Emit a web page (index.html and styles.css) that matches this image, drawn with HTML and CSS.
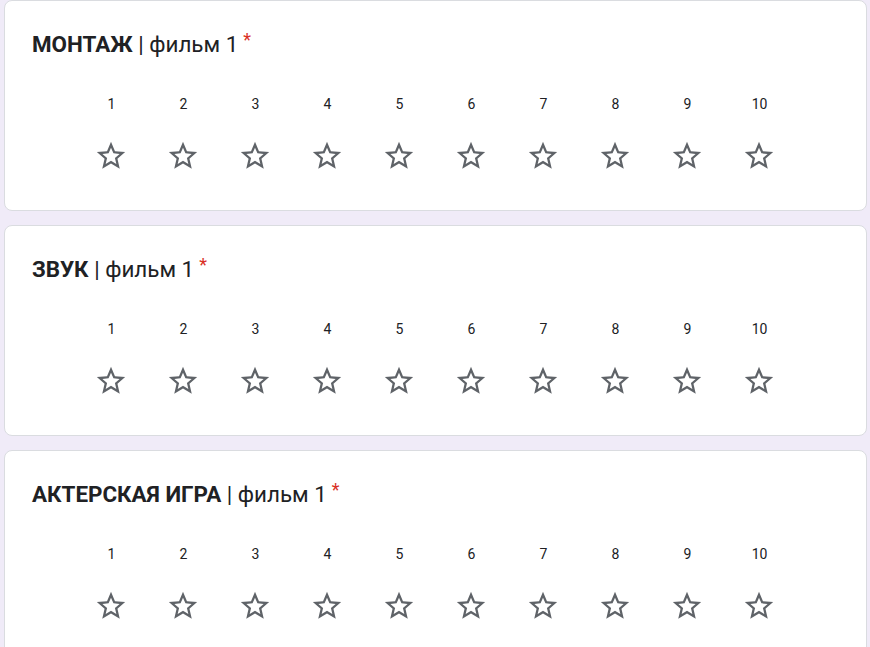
FILE: index.html
```html
<!DOCTYPE html>
<html lang="ru">
<head>
<meta charset="utf-8">
<title>Форма</title>
<link rel="stylesheet" href="styles.css">
</head>
<body>
<main class="form">
  <section class="card">
    <div class="title"><b>МОНТАЖ</b> | фильм 1<span class="req">*</span></div>
    <div class="scale"></div>
  </section>
  <section class="card">
    <div class="title"><b>ЗВУК</b> | фильм 1<span class="req">*</span></div>
    <div class="scale"></div>
  </section>
  <section class="card">
    <div class="title"><b>АКТЕРСКАЯ ИГРА</b> | фильм 1<span class="req">*</span></div>
    <div class="scale"></div>
  </section>
</main>
<script>
  var star = '<svg class="star" viewBox="0 0 24 24" width="34" height="34"><path d="M22 9.24l-7.19-.62L12 2 9.19 8.63 2 9.24l5.46 4.73L5.82 21 12 17.27 18.18 21l-1.63-7.03L22 9.24zM12 15.4l-3.76 2.27 1-4.28-3.32-2.88 4.38-.38L12 6.1l1.71 4.04 4.38.38-3.32 2.88 1 4.28L12 15.4z"/></svg>';
  document.querySelectorAll('.scale').forEach(function (s) {
    var h = '';
    for (var i = 1; i <= 10; i++) {
      h += '<label class="opt"><span class="num">' + i + '</span>' + star + '</label>';
    }
    s.innerHTML = h;
  });
</script>
</body>
</html>
```
FILE: styles.css
```css
html, body {
  margin: 0;
  padding: 0;
  background: #f0ebf8;
}
body {
  font-family: Roboto, "Noto Sans", sans-serif;
  color: #202124;
}
.form {
  display: flex;
  flex-direction: column;
  gap: 14px;
  padding-left: 4px;
  width: 863px;
}
.card {
  box-sizing: border-box;
  height: 211px;
  background: #fff;
  border: 1px solid #dadce0;
  border-radius: 8px;
  padding: 30px 27px 0;
}
.title {
  font-size: 22.4px;
  line-height: 24px;
  font-weight: 400;
  padding-top: 1px;
}
.title b {
  font-weight: 700;
}
.req {
  color: #d93025;
  padding-left: 5px;
  font-size: 18px;
  vertical-align: top;
  line-height: 16px;
}
.scale {
  display: flex;
  justify-content: center;
  margin-top: 38px;
  margin-left: -28px;
  margin-right: -26px;
}
.opt {
  width: 72px;
  display: flex;
  flex-direction: column;
  align-items: center;
  gap: 25px;
}
.num {
  font-size: 14px;
  line-height: 20px;
  color: #202124;
  padding-left: 2px;
}
.star {
  display: block;
  fill: #5f6368;
}
```
